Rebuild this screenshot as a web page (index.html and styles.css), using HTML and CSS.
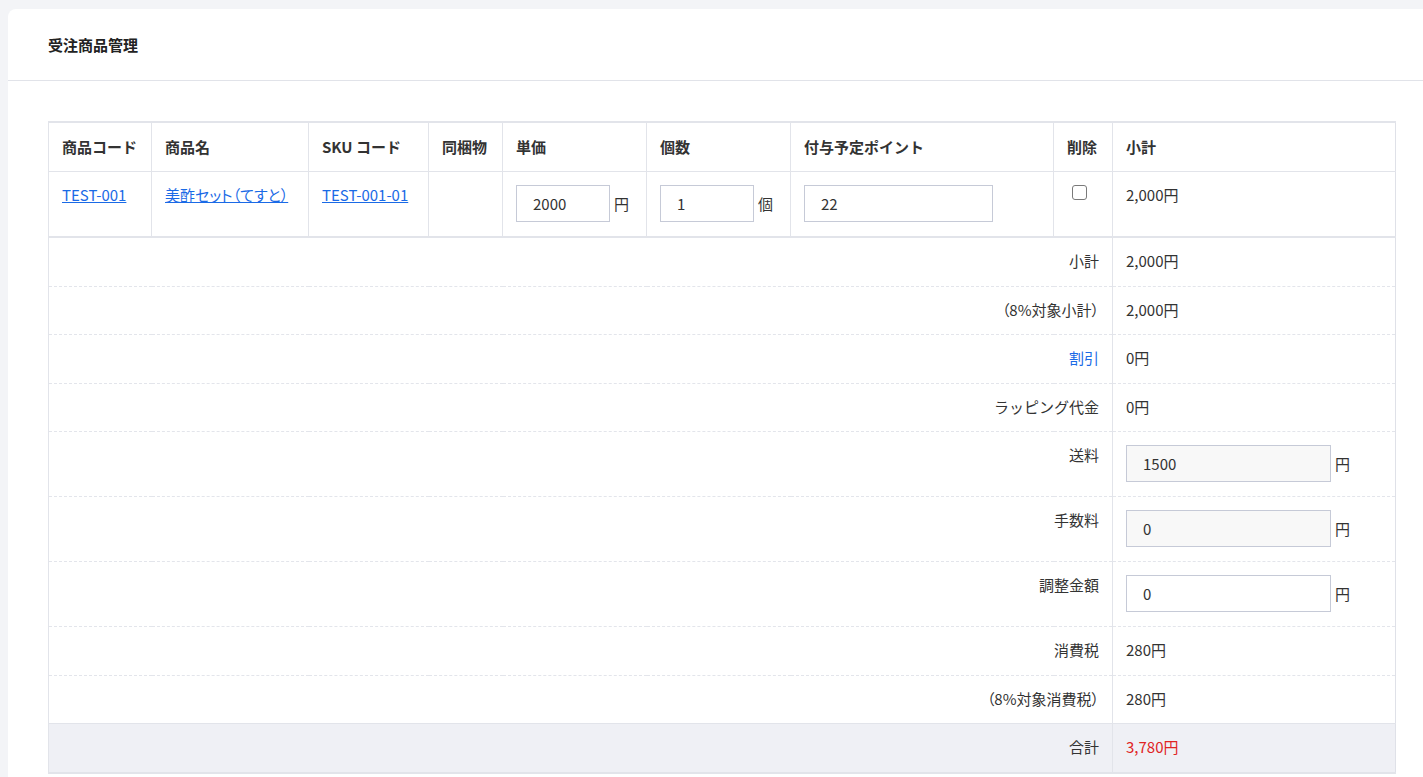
FILE: index.html
```html
<!DOCTYPE html>
<html lang="ja">
<head>
    <meta charset="UTF-8">
    <meta name="viewport" content="width=device-width, initial-scale=1.0">
    <title>受注商品管理</title>
    <link rel="stylesheet" href="styles.css">
</head>
<body>
    <div class="page">
        <div class="card">
            <div class="card-header">受注商品管理</div>
            <div class="card-body">
                <table class="items">
                    <colgroup>
                        <col style="width:103px">
                        <col style="width:157px">
                        <col style="width:120px">
                        <col style="width:74px">
                        <col style="width:144px">
                        <col style="width:144px">
                        <col style="width:263px">
                        <col style="width:59px">
                        <col style="width:283px">
                    </colgroup>
                    <thead>
                        <tr>
                            <th>商品コード</th>
                            <th>商品名</th>
                            <th>SKU コード</th>
                            <th>同梱物</th>
                            <th>単価</th>
                            <th>個数</th>
                            <th>付与予定ポイント</th>
                            <th>削除</th>
                            <th>小計</th>
                        </tr>
                    </thead>
                    <tbody class="lines">
                        <tr>
                            <td><a href="#">TEST-001</a></td>
                            <td><a class="palt" href="#">美酢セット（てすと）</a></td>
                            <td><a href="#">TEST-001-01</a></td>
                            <td></td>
                            <td><input class="field small" type="text" value="2000"><span class="unit">円</span></td>
                            <td><input class="field small" type="text" value="1"><span class="unit">個</span></td>
                            <td><input class="field points" type="text" value="22"></td>
                            <td><input class="check" type="checkbox"></td>
                            <td>2,000円</td>
                        </tr>
                    </tbody>
                    <tbody class="summary">
                        <tr>
                            <td class="label" colspan="8">小計</td>
                            <td class="value">2,000円</td>
                        </tr>
                        <tr>
                            <td class="label palt" colspan="8">（8%対象小計）</td>
                            <td class="value">2,000円</td>
                        </tr>
                        <tr>
                            <td class="label link" colspan="8">割引</td>
                            <td class="value">0円</td>
                        </tr>
                        <tr>
                            <td class="label" colspan="8">ラッピング代金</td>
                            <td class="value">0円</td>
                        </tr>
                        <tr>
                            <td class="label" colspan="8">送料</td>
                            <td class="value"><input class="field wide readonly" type="text" value="1500"><span class="unit">円</span></td>
                        </tr>
                        <tr>
                            <td class="label" colspan="8">手数料</td>
                            <td class="value"><input class="field wide readonly" type="text" value="0"><span class="unit">円</span></td>
                        </tr>
                        <tr>
                            <td class="label" colspan="8">調整金額</td>
                            <td class="value"><input class="field wide" type="text" value="0"><span class="unit">円</span></td>
                        </tr>
                        <tr>
                            <td class="label" colspan="8">消費税</td>
                            <td class="value">280円</td>
                        </tr>
                        <tr>
                            <td class="label palt" colspan="8">（8%対象消費税）</td>
                            <td class="value">280円</td>
                        </tr>
                        <tr class="total">
                            <td class="label" colspan="8">合計</td>
                            <td class="value red">3,780円</td>
                        </tr>
                    </tbody>
                </table>
            </div>
        </div>
    </div>
</body>
</html>
```

FILE: styles.css
```css
*{padding: 0;margin: 0;box-sizing: border-box;}
html,body{
    width: 100%;
    height: 100%;
}
body{
    overflow: hidden;
    background: #f3f4f7;
    font-family: "Noto Sans CJK JP", "Noto Sans", sans-serif;
    font-size: 15px;
    color: #333;
}
.page{
    padding: 9px 0 0 8px;
}
.card{
    width: 1427px;
    background: #fff;
    border-radius: 8px 8px 0 0;
}
.card-header{
    height: 72px;
    padding: 0 40px;
    line-height: 71px;
    font-weight: 700;
    color: #222;
    border-bottom: 1px solid #e1e3e9;
}
.card-body{
    padding: 40px;
}

/* 商品テーブル */
.items{
    width: 1347px;
    table-layout: fixed;
    border-collapse: collapse;
    border-left: 1px solid #dfe1e8;
    border-right: 1px solid #dfe1e8;
    border-top: 2px solid #e2e4ea;
    border-bottom: 2px solid #e2e4ea;
}
.items th,
.items td{
    padding: 13px 13px 14px;
    line-height: 20.5px;
    text-align: left;
    vertical-align: top;
    border-left: 1px solid #e2e4ea;
    white-space: nowrap;
}
.items th{
    font-weight: 700;
    line-height: 21px;
    border-bottom: 1px solid #e2e4ea;
}
.items .lines td{
    border-bottom: 2px solid #e2e4ea;
}
.items a{
    color: #1a6ae6;
    text-decoration: underline;
}
.palt{
    font-feature-settings: "palt";
}

.field{
    display: inline-block;
    height: 37px;
    padding: 0 16px;
    border: 1px solid #c6cad7;
    font-family: inherit;
    font-size: 15px;
    color: #333;
    background: #fff;
    vertical-align: top;
    outline: none;
}
.field.small{
    width: 94px;
}
.field.points{
    width: 189px;
}
.field.wide{
    width: 205px;
}
.field.readonly{
    background: #f8f8f8;
}
.unit{
    display: inline-block;
    margin-left: 4px;
    line-height: 37px;
    vertical-align: top;
}
.check{
    appearance: none;
    -webkit-appearance: none;
    width: 15px;
    height: 15px;
    margin: 0 0 0 5px;
    border: 1px solid #7a7a7a;
    border-radius: 3px;
    background: #fff;
    vertical-align: top;
}

/* 集計 */
.summary td.label{
    text-align: right;
    border-bottom: 1px dashed #e3e5eb;
}
.summary td.value{
    border-bottom: 1px dashed #e3e5eb;
}
.summary td.link{
    color: #1a6ae6;
}
.summary .total td{
    background: #eff0f5;
    border-top: 1px solid #e2e4ea;
    border-bottom: none;
}
.red{
    color: #e02424;
}
```
